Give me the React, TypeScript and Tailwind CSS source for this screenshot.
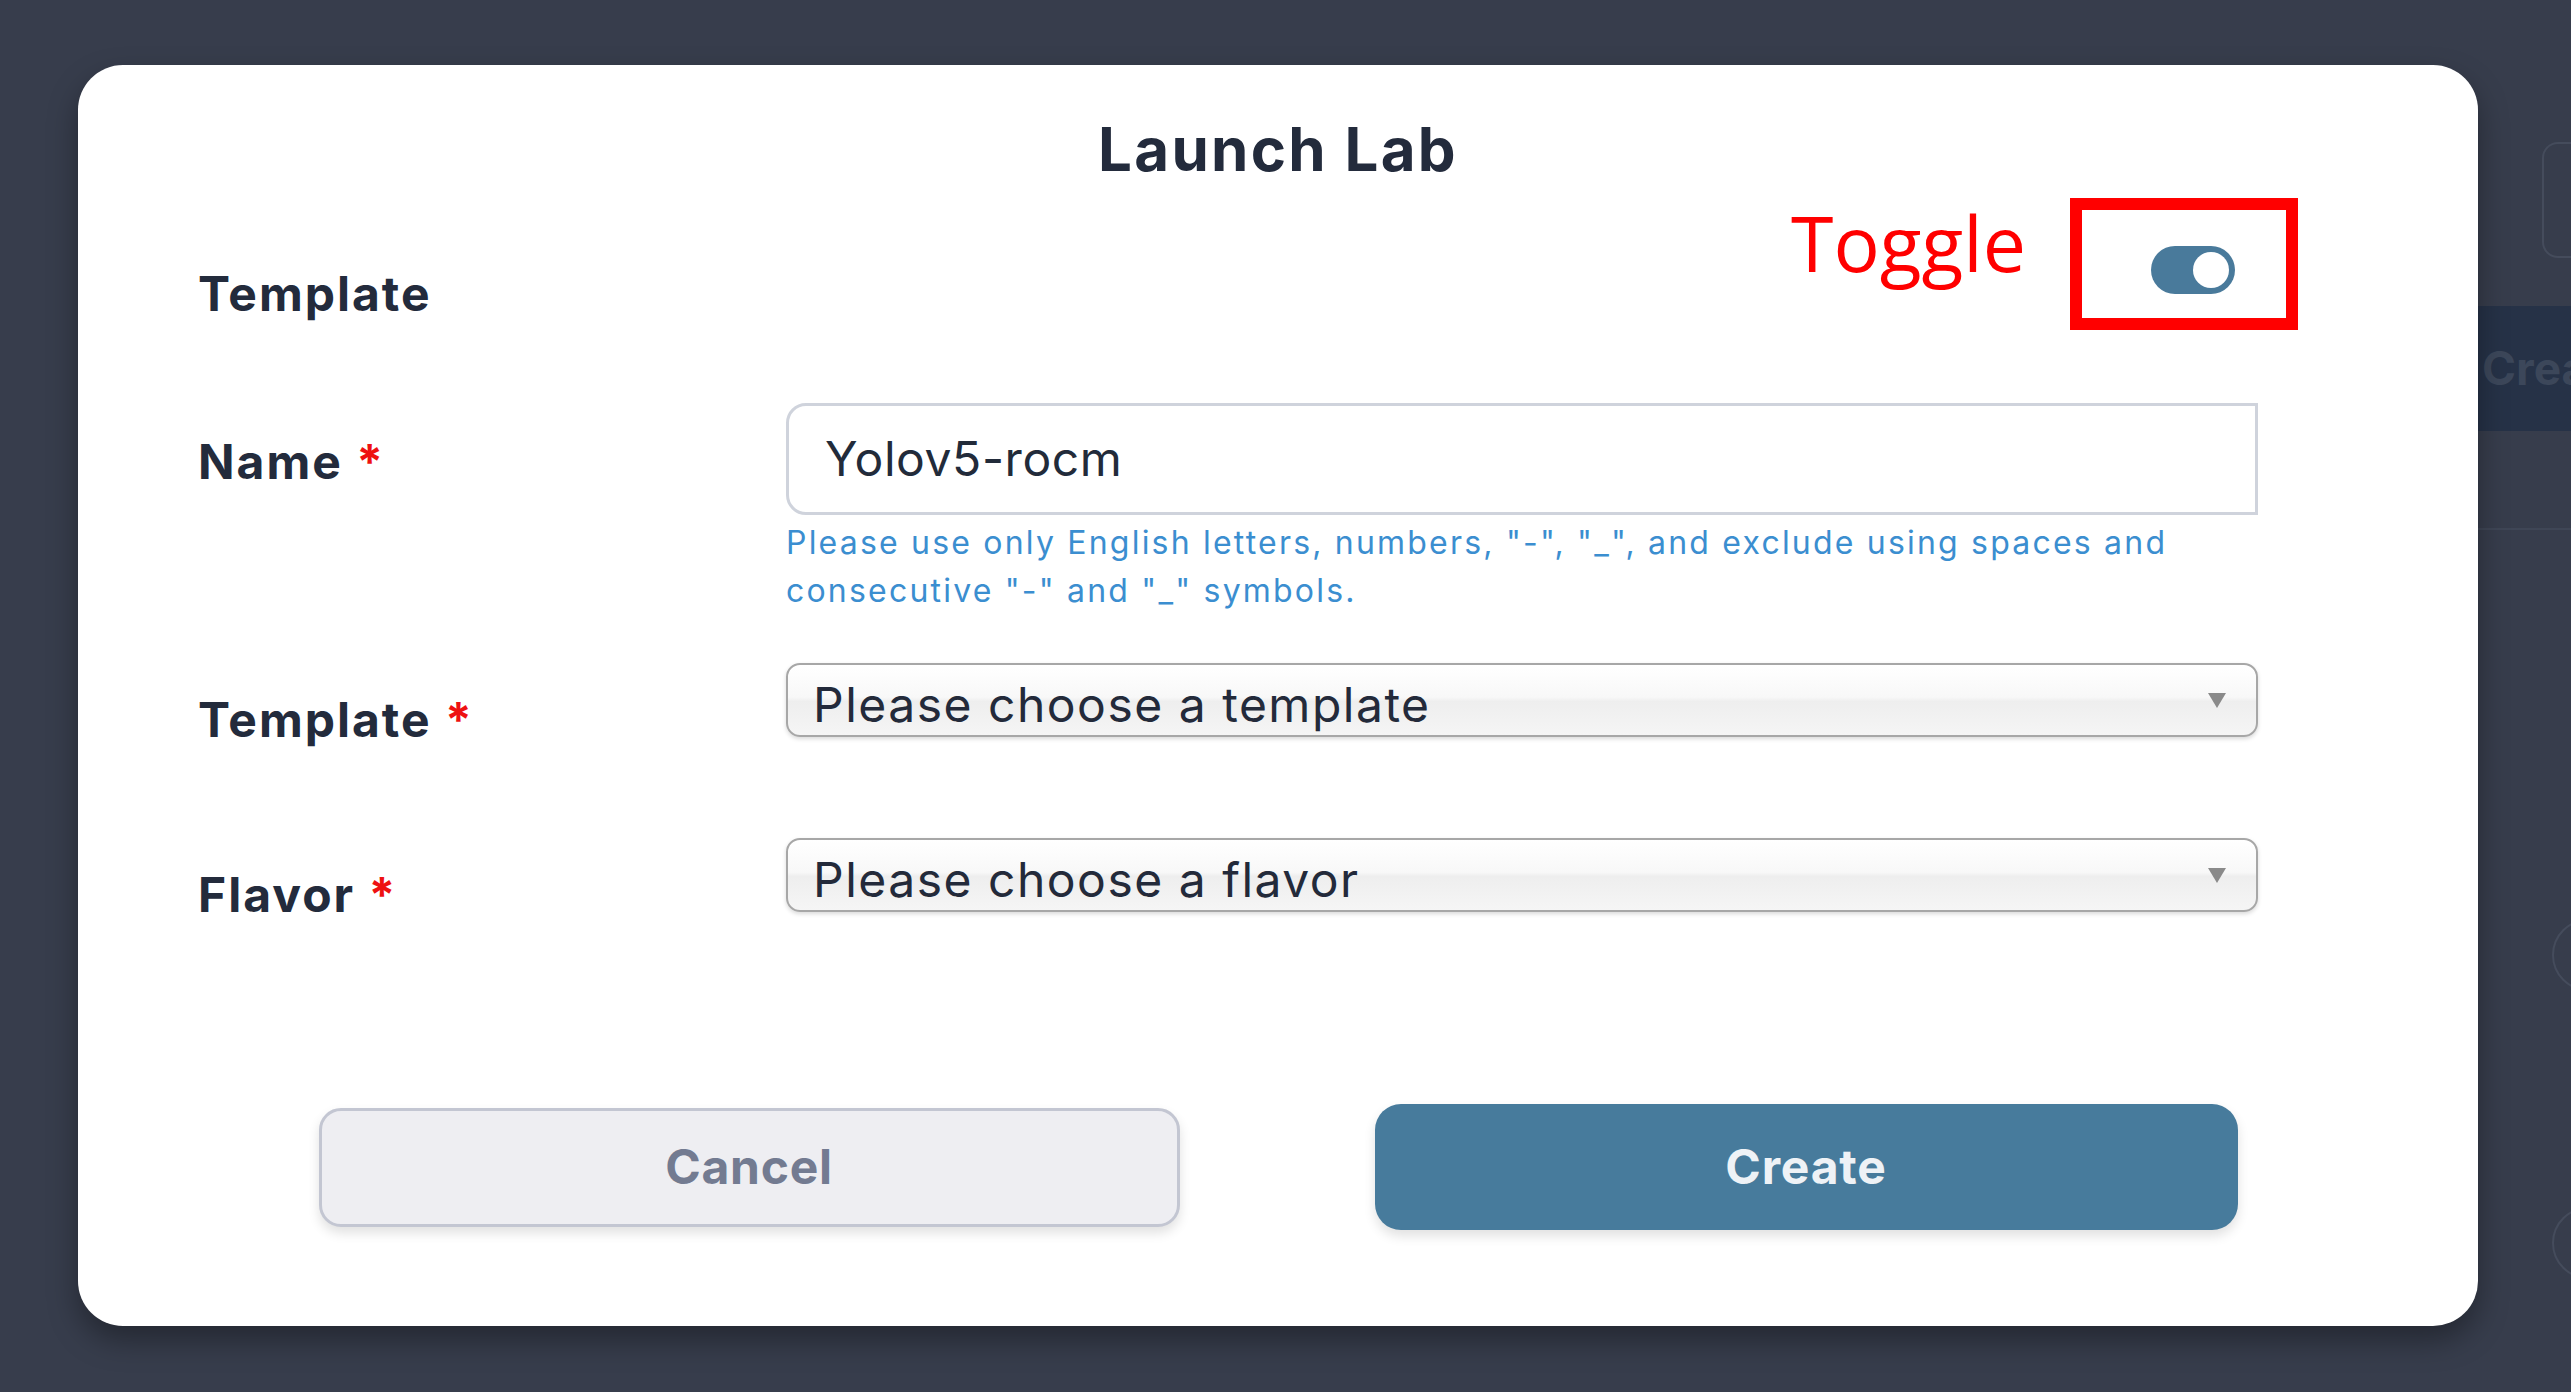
import React from "react";

const helperLine1 = 'Please use only English letters, numbers, "-", "_", and exclude using spaces and';
const helperLine2 = 'consecutive "-" and "_" symbols.';

const Required = () => <span className="text-[#ee1111]"> *</span>;

const SelectBox = ({ placeholder }: { placeholder: string }) => {
  return (
    <div className="flex h-[74px] items-center justify-between rounded-[14px] border-2 border-[#a7a7a7] bg-[linear-gradient(#ffffff_0%,#f8f8f8_46%,#eeeeee_52%,#f5f5f5_100%)] pl-[25px] pr-[30px] shadow-[0_2px_4px_rgba(0,0,0,0.15)]">
      <span className="mt-[9px] text-[48px] leading-[48px] tracking-[1.5px] text-[#232a3a]">{placeholder}</span>
      <svg width="18" height="15" viewBox="0 0 18 15">
        <path d="M0 0 L18 0 L9 15 Z" fill="#8a8a8a" />
      </svg>
    </div>
  );
};

// page behind the dialog, only a strip of it shows on the right
const BackdropPage = () => {
  return (
    <div className="absolute inset-0 flex justify-end">
      <div className="flex w-[300px] flex-col pt-[142px]">
        <div className="ml-[271px] h-[116px] rounded-l-[16px] border-2 border-r-0 border-[#454c5c]" />
        <div className="mt-[48px] flex h-[125px] items-center bg-[#263247] pl-[211px] text-[46px] font-bold text-[#3c475a]">
          Create
        </div>
        <div className="h-[97px]" />
        <div className="border-t-2 border-[#3f4656]" />
        <div className="ml-[281px] mt-[389px] h-[72px] w-[140px] rounded-full border-2 border-[#454c5c]" />
        <div className="ml-[281px] mt-[216px] h-[72px] w-[140px] rounded-full border-2 border-[#454c5c]" />
      </div>
    </div>
  );
};

export default function App() {
  return (
    <div className="relative h-[1392px] w-full overflow-hidden bg-[#373d4c] font-['Inter',sans-serif]">
      <BackdropPage />

      <div className="absolute inset-0 pl-[78px] pt-[65px]">
        <div className="h-[1261px] w-[2400px] rounded-[45px] bg-white pt-[54px] shadow-[0_14px_30px_rgba(0,0,0,0.35)]">
          <h1 className="text-center text-[60px] font-bold leading-[60px] tracking-[2.3px] text-[#232b3c]">Launch Lab</h1>

          <div className="mt-[19px] flex h-[132px] justify-between pl-[120px] pr-[180px]">
            <div className="mt-[72px] text-[48px] font-bold leading-[48px] tracking-[2px] text-[#232b3c]">Template</div>
            <div className="flex items-start gap-[44px]">
              <span className="mt-[6px] font-['Open_Sans',sans-serif] text-[77px] leading-[78px] text-[#ff0000]">Toggle</span>
              <div className="h-[132px] w-[228px] border-[12px] border-[#ff0000] pl-[69px] pt-[36px]">
                <div className="flex h-[48px] w-[84px] items-center justify-end rounded-full bg-[#497a9b] pr-[6px]">
                  <div className="h-[36px] w-[36px] rounded-full bg-white" />
                </div>
              </div>
            </div>
          </div>

          <div className="mt-[73px] grid grid-cols-[588px_1472px] pl-[120px]">
            <div className="mt-[35px] text-[48px] font-bold leading-[48px] tracking-[2px] text-[#232b3c]">
              Name
              <Required />
            </div>
            <div>
              <div className="flex h-[112px] items-center rounded-l-[20px] border-[3px] border-[#cfd3dc] pl-[36px] text-[48px] leading-[48px] tracking-[0.6px] text-[#222b3a]">
                Yolov5-rocm
              </div>
              <p className="mt-[4px] text-[32px] leading-[48px] tracking-[2.2px] text-[#3b8ed0]">
                {helperLine1}
                <br />
                {helperLine2}
              </p>
            </div>
          </div>

          <div className="mt-[48px] grid h-[74px] grid-cols-[588px_1472px] items-start pl-[120px]">
            <div className="mt-[33px] text-[48px] font-bold leading-[48px] tracking-[2px] text-[#232b3c]">
              Template
              <Required />
            </div>
            <SelectBox placeholder="Please choose a template" />
          </div>

          <div className="mt-[101px] grid h-[74px] grid-cols-[588px_1472px] items-start pl-[120px]">
            <div className="mt-[33px] text-[48px] font-bold leading-[48px] tracking-[2px] text-[#232b3c]">
              Flavor
              <Required />
            </div>
            <SelectBox placeholder="Please choose a flavor" />
          </div>

          <div className="mt-[192px] flex h-[126px] items-center justify-center gap-[195px]">
            <button className="h-[119px] w-[861px] rounded-[22px] border-[3px] border-[#c3c6d2] bg-[#eeeef2] text-[48px] font-bold tracking-[0.7px] text-[#737b91] shadow-[0_6px_12px_rgba(0,0,0,0.12)]">
              Cancel
            </button>
            <button className="h-[126px] w-[863px] rounded-[26px] bg-[#477b9c] text-[48px] font-bold tracking-[0.8px] text-[#eef2f6] shadow-[0_6px_12px_rgba(0,0,0,0.12)]">
              Create
            </button>
          </div>
        </div>
      </div>
    </div>
  );
}
